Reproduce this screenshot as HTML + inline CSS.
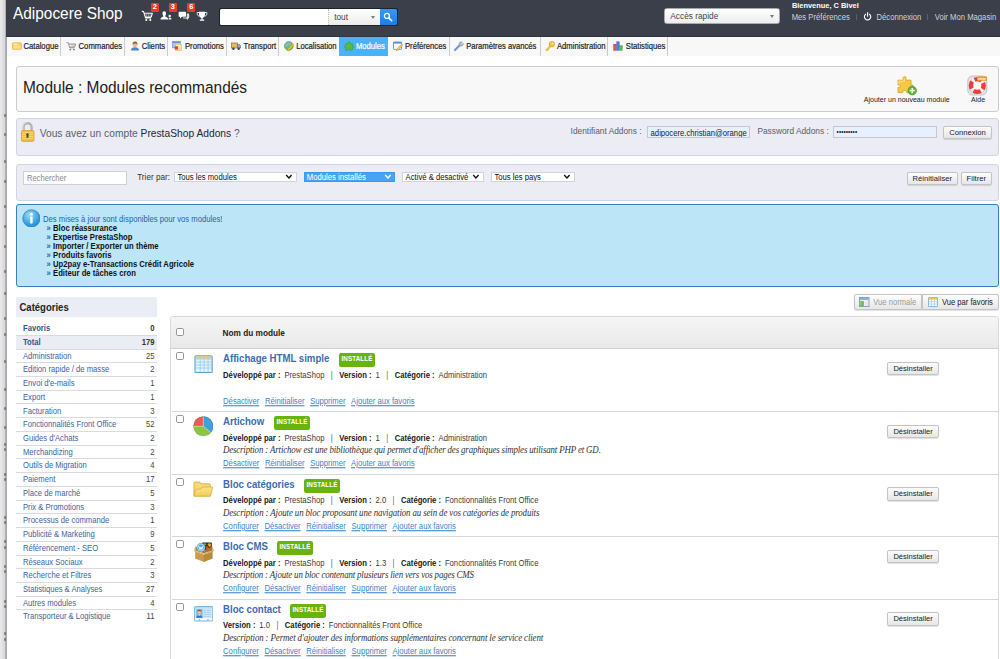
<!DOCTYPE html>
<html lang="fr">
<head>
<meta charset="utf-8">
<title>Modules</title>
<style>
*{box-sizing:border-box;margin:0;padding:0}
html,body{width:1000px;height:659px;overflow:hidden;background:#fff}
body{font-family:"Liberation Sans",sans-serif;font-size:8.5px;color:#222;position:relative}
.abs{position:absolute}
/* left edge strip */
#edge{z-index:5;left:0;top:0;width:7px;height:659px;background:linear-gradient(90deg,#e8e8e8 0,#e7e7e7 2px,#dbdcdf 2.7px,#d8d9dc 4.9px,#b0b0b0 5.5px,#a9a9a9 6.5px,#cfcfcf 7px)}
/* header */
#hdr{left:6px;top:0;width:994px;height:36.6px;background:#3a3f49;border-bottom:1px solid #2f343d}
#shop{left:12.9px;top:3.5px;font-size:17px;color:#fff;white-space:nowrap;transform:scaleX(.906);transform-origin:0 0}
#tabs{left:6px;top:36.5px;width:994px;height:19.3px;background:#f8f8f8}
.tab{position:absolute;top:0;height:19.1px;background:#f8f8f8;border-right:1px solid #ccc;font-size:7.66px;color:#222;white-space:nowrap;line-height:19px}
.tab span{-webkit-text-stroke:.18px currentColor}
.tab.on{background:#49b2ff;color:#fff;border-right:none;margin-left:-.75px;width:48.3px !important}
.tab + .tab > *{margin-left:-1px}
/* boxes */
.box{position:absolute;border:1px solid #ccc;border-radius:3px}
#tbar{left:16px;top:66px;width:982.5px;height:45.7px;background:#f8f8f8}
#ttl{left:23.3px;top:77.7px;font-size:16.35px;color:#222;white-space:nowrap;transform:scaleX(.945);transform-origin:0 0}
#addons{left:16px;top:117.7px;width:982.5px;height:38px;background:#ebecf4;border-color:#d3d4e3}
#filt{left:16px;top:164px;width:982.5px;height:37px;background:#ebecf4;border-color:#d3d4e3}
#info{left:16px;top:203.9px;width:982.5px;height:82.9px;background:#bde5f8;border-color:#3580c0}
.inp{position:absolute;background:#fff;border:1px solid #ccc;font-size:7.2px;color:#333;white-space:nowrap;overflow:hidden}
.btn{position:absolute;border:1px solid #c4c4c4;box-shadow:0 .6px .8px rgba(0,0,0,.12);border-radius:2px;background:linear-gradient(#fdfdfd,#e6e6e6);font-size:7.4px;color:#222;text-align:center;white-space:nowrap}
.sel{position:absolute;background:#fff;border:1px solid #d2d3da;border-radius:.5px;font-size:7.7px;color:#111;white-space:nowrap;overflow:hidden}
.t{position:absolute;white-space:nowrap}
.t,.tab span,.cat span,.cat i,.meta,.lk,.desc,.sel span,.inp span{transform:scaleY(1.07);transform-origin:0 55%}
#tbl{left:169.8px;top:316.2px;width:829.2px;height:360px;border:1px solid #d9d9d9;border-radius:3px 3px 0 0;background:#fff}
#thd{left:170.8px;top:317.2px;width:827.2px;height:31.8px;border-radius:2px 2px 0 0;background:linear-gradient(#f5f5f5,#e9e9e9);border-bottom:1px solid #d0d0d0}
.cb{position:absolute;width:8.2px;height:8.2px;border:1px solid #979797;border-radius:1.8px;background:#fff}
.row{position:absolute;left:170.5px;width:828.5px;height:64px}
.sep{position:absolute;left:171.5px;width:827px;height:1px;background:#d6d6d6}
.mn{position:absolute;left:52.6px;top:4.2px;font-size:10.25px;font-weight:bold;color:#3c6cb0;white-space:nowrap;transform:scaleX(.9395);transform-origin:0 0}
.ins{position:absolute;top:4.4px;width:36.3px;height:13.8px;border-radius:2.2px;background:#68b30c;color:#fff;font-size:7.3px;font-weight:bold;line-height:11.9px;text-align:center;white-space:nowrap}
.ins b{display:inline-block;transform:scaleX(.86);transform-origin:50% 50%;letter-spacing:.1px}
.meta{position:absolute;left:52.6px;top:21.9px;font-size:7.66px;color:#3a3a3a;white-space:nowrap}
.meta b{color:#1a1a1a}
.meta u{display:inline-block;width:3.9px}
.meta s{text-decoration:none;color:#666;margin:0 4.3px}
.desc{position:absolute;left:52.4px;top:33.1px;font-family:"Liberation Serif",serif;font-style:italic;font-size:8.9px;letter-spacing:-.156px;color:#333;white-space:nowrap}
.lk{position:absolute;left:52.6px;top:47.7px;font-size:7.67px;white-space:nowrap}
.lk a{color:#3d85cc;text-decoration:underline;margin-right:5.65px}

.cat{position:absolute;left:16.2px;width:141.3px;border-bottom:1px solid #d9dae2;font-size:7.65px;line-height:13px;color:#3d63a0;white-space:nowrap}
.cat span{position:absolute;left:6.8px}
.cat i{position:absolute;right:3px;font-style:normal;color:#444}
.cat.b{font-weight:bold;color:#2f5590}
.cat.b i{color:#333}
.cat.hl{background:#ebedf4}
.cat.last{border-bottom:none}

.chev{position:absolute;right:3.2px;top:1px;width:7.8px;height:5.4px}
.rq{font-weight:bold;color:#2d6496}
.bdg{position:absolute;top:3.2px;width:7.8px;height:8.5px;border-radius:1px;background:#ee3b24;color:#fff;font-weight:bold;font-size:7.4px;line-height:8.6px;text-align:center}
</style>
</head>
<body>
<div id="edge" class="abs"></div>
<svg class="abs" style="left:0;top:0;z-index:6" width="7" height="659" viewBox="0 0 7 659" fill="rgba(70,60,60,.55)"><rect x="4" y="114" width="2" height="3" rx=".8"/><rect x="4" y="133" width="2" height="3" rx=".8"/><rect x="4" y="160" width="2" height="3" rx=".8"/><rect x="4" y="180" width="2" height="3" rx=".8"/><rect x="4" y="205" width="2" height="3" rx=".8"/><rect x="4" y="225" width="2" height="3" rx=".8"/><rect x="4" y="245" width="2" height="3" rx=".8"/><rect x="4" y="270" width="2" height="3" rx=".8"/><rect x="4" y="292" width="2" height="3" rx=".8"/><rect x="4" y="317" width="2" height="3" rx=".8"/><rect x="4" y="333" width="2" height="3" rx=".8"/><rect x="4" y="360" width="2" height="3" rx=".8"/><rect x="4" y="388" width="2" height="3" rx=".8"/><rect x="4" y="407" width="2" height="3" rx=".8"/><rect x="4" y="426" width="2" height="3" rx=".8"/><rect x="4" y="443" width="2" height="3" rx=".8"/><rect x="4" y="448" width="2" height="3" rx=".8"/><rect x="4" y="473" width="2" height="3" rx=".8"/><rect x="4" y="478" width="2" height="3" rx=".8"/><rect x="4" y="516" width="2" height="3" rx=".8"/><rect x="4" y="521" width="2" height="3" rx=".8"/><rect x="4" y="540" width="2" height="3" rx=".8"/><rect x="4" y="546" width="2" height="3" rx=".8"/><rect x="4" y="565" width="2" height="3" rx=".8"/><rect x="4" y="570" width="2" height="3" rx=".8"/><rect x="4" y="600" width="2" height="3" rx=".8"/><rect x="4" y="605" width="2" height="3" rx=".8"/><rect x="4" y="632" width="2" height="3" rx=".8"/><rect x="4" y="638" width="2" height="3" rx=".8"/></svg>
<div class="abs" style="left:0;top:0;z-index:7">
<div id="hdr" class="abs"></div>
<div id="shop" class="abs">Adipocere Shop</div>
<svg class="abs" style="left:141px;top:10px" width="13" height="12" viewBox="0 0 13 12"><path d="M0.8 1.2 L2.6 1.6 L4.6 8 L10 8 M3.2 3.2 L11.4 3.2 L10.2 7 L4.4 7" fill="none" stroke="#fff" stroke-width="1.1" stroke-linejoin="round"/><path d="M5.2 3.4 L5.6 6.6 M7.3 3.4 L7.3 6.6 M9.3 3.4 L9 6.6" stroke="#cfd1d4" stroke-width=".6"/><circle cx="5.3" cy="10" r="1.05" fill="#fff"/><circle cx="9.3" cy="10" r="1.05" fill="#fff"/></svg>
<svg class="abs" style="left:160px;top:11px" width="12" height="10" viewBox="0 0 12 10"><path d="M4.2 0.3 C5.6 0.3 6.2 1.4 6 2.8 C5.9 3.8 5.6 4.3 5.3 4.7 L5.3 5.6 C6.6 6.2 8.1 6.5 8.2 8.6 L0.5 8.6 C0.6 6.5 2 6.2 3.2 5.6 L3.2 4.7 C2.9 4.3 2.6 3.8 2.5 2.8 C2.3 1.4 2.9 0.3 4.2 0.3Z" fill="#fff"/><circle cx="9.7" cy="4.9" r="1.25" fill="#eeeff0"/><path d="M8.5 8.6 C8.6 7.2 8.9 6.5 9.7 6.5 C10.8 6.5 11.4 7.3 11.5 8.6Z" fill="#eeeff0"/></svg>
<svg class="abs" style="left:178px;top:11px" width="12" height="10" viewBox="0 0 12 10"><path d="M1.4 0.8 H7.2 Q8 0.8 8 1.6 V5 Q8 5.8 7.2 5.8 H4 L2 7.6 V5.8 H1.4 Q0.6 5.8 0.6 5 V1.6 Q0.6 0.8 1.4 0.8Z" fill="#fff"/><path d="M8.8 2.6 H10.4 Q11.2 2.6 11.2 3.4 V6.6 Q11.2 7.4 10.4 7.4 H10 V9 L8.2 7.4 H5.4 Q4.9 7.4 4.7 7 L5 6.6 H8 Q8.8 6.6 8.8 5.8Z" fill="#dfe0e2"/></svg>
<svg class="abs" style="left:196px;top:11px" width="12" height="11" viewBox="0 0 12 11"><path d="M3 0.7 H9 V3.4 C9 5.4 7.6 6.6 6.6 6.9 V8.4 H8.2 V9.8 H3.8 V8.4 H5.4 V6.9 C4.4 6.6 3 5.4 3 3.4Z" fill="#fff"/><path d="M3 1.5 H1.2 V2.8 C1.2 4.2 2.2 5 3.4 5.2 M9 1.5 H10.8 V2.8 C10.8 4.2 9.8 5 8.6 5.2" fill="none" stroke="#fff" stroke-width=".9"/></svg>
<div class="bdg" style="left:151px">2</div><div class="bdg" style="left:169px">3</div><div class="bdg" style="left:187.3px">6</div>

<div class="abs" style="left:219px;top:7.7px;width:179px;height:18.3px;background:#1f2226;border-radius:2px"></div>
<div class="abs" style="left:220px;top:8.7px;width:108px;height:16.3px;background:#fff;border-radius:1.5px 0 0 1.5px"></div>
<div class="abs" style="left:328px;top:8.7px;width:51.5px;height:16.3px;background:linear-gradient(#fff,#ececec);border-left:1px dotted #bbb"></div>
<div class="t" style="left:334.2px;top:12px;font-size:8.3px;color:#444">tout</div>
<div class="abs" style="left:371px;top:15.6px;width:0;height:0;border-left:2.7px solid transparent;border-right:2.7px solid transparent;border-top:3.2px solid #7c7c7c"></div>
<div class="abs" style="left:379.5px;top:8.7px;width:17.8px;height:16.3px;background:linear-gradient(#3a97f5,#1c7de6);border-radius:0 1.5px 1.5px 0"></div>
<svg class="abs" style="left:383px;top:11.8px" width="10" height="10" viewBox="0 0 10 10"><circle cx="3.9" cy="3.9" r="2.5" fill="none" stroke="#fff" stroke-width="1.3"/><path d="M5.8 5.8 L8.6 8.6" stroke="#fff" stroke-width="1.7" stroke-linecap="round"/></svg>
<div class="abs" style="left:664px;top:7.8px;width:115.5px;height:16.2px;background:linear-gradient(#fff,#ededed);border:1px solid #aaa;border-radius:2.5px"></div>
<div class="t" style="left:670.3px;top:11.2px;font-size:8.3px;color:#444">Accès rapide</div>
<div class="abs" style="left:769.8px;top:14.8px;width:0;height:0;border-left:2.9px solid transparent;border-right:2.9px solid transparent;border-top:3.3px solid #777"></div>
<div class="t" style="left:791.9px;top:1.3px;font-size:7.43px;font-weight:bold;color:#fff">Bienvenue, C Bivel</div>
<div class="t" style="left:791.7px;top:12.9px;font-size:7.7px;color:#d0d3d8">Mes Préférences</div>
<div class="abs" style="left:855.8px;top:13.6px;width:1px;height:6.6px;background:#5b5f66"></div>
<svg class="abs" style="left:863px;top:12.4px" width="9.2" height="9.2" viewBox="0 0 9 9"><path d="M2.6 2.2 A3.1 3.1 0 1 0 6.4 2.2" fill="none" stroke="#fff" stroke-width="1.1" stroke-linecap="round"/><path d="M4.5 0.6 V4.2" stroke="#fff" stroke-width="1.1" stroke-linecap="round"/></svg>
<div class="t" style="left:876.5px;top:12.9px;font-size:7.7px;color:#d0d3d8">Déconnexion</div>
<div class="abs" style="left:927px;top:13.6px;width:1px;height:6.6px;background:#5b5f66"></div>
<div class="t" style="left:934.7px;top:12.9px;font-size:7.7px;color:#d0d3d8">Voir Mon Magasin</div>

</div>
<div id="tabs" class="abs">
<div class="tab" style="left:0px;width:55px"><svg class="abs" style="left:5.6px;top:4.6px" width="10" height="10" viewBox="0 0 10 10"><rect x=".5" y="1.9" width="8.8" height="6.3" rx=".6" fill="#f9d46a" stroke="#e9a83f" stroke-width=".8"/><rect x="1.4" y="2.7" width="4" height="1.1" fill="#fff3c4"/><rect x="1.2" y="4.6" width="7.4" height="2.9" fill="#fbe08b"/></svg><span class="abs" style="left:17.5px;top:0">Catalogue</span></div>
<div class="tab" style="left:55px;width:64px"><svg class="abs" style="left:6px;top:4.6px" width="10" height="10" viewBox="0 0 10 10"><path d="M.5 1.5 L2.3 1.8 L3.6 6.8 H8.6 M2.7 3 H9.6 L8.7 6 H3.6" fill="#d9d9d9" stroke="#8f8f8f" stroke-width=".9" stroke-linejoin="round"/><circle cx="4.3" cy="8.6" r=".9" fill="#777"/><circle cx="7.9" cy="8.6" r=".9" fill="#777"/></svg><span class="abs" style="left:18.6px;top:0">Commandes</span></div>
<div class="tab" style="left:119px;width:43px"><svg class="abs" style="left:6px;top:4.6px" width="10" height="10" viewBox="0 0 10 10"><path d="M1 9.6 C1 7 2.5 6.3 5 6.3 C7.5 6.3 9 7 9 9.6Z" fill="#4d86c9"/><circle cx="5" cy="3.8" r="2.4" fill="#f0b98a"/><path d="M2.5 3.6 C2.4 1.5 3.6 .6 5 .6 C6.4 .6 7.6 1.5 7.5 3.6 C6.8 2.6 6 2.4 5 2.4 C4 2.4 3.2 2.6 2.5 3.6Z" fill="#8a5a2b"/></svg><span class="abs" style="left:17.7px;top:0">Clients</span></div>
<div class="tab" style="left:162px;width:59px"><svg class="abs" style="left:5px;top:4.6px" width="10" height="10" viewBox="0 0 10 10"><rect x=".4" y=".6" width="8" height="6.2" fill="#a9c8ee" stroke="#6d9bd6" stroke-width=".6"/><rect x=".4" y=".6" width="8" height="1.4" fill="#5f93da"/><rect x="3.6" y="3.2" width="6" height="6.2" fill="#fbe7a6" stroke="#e5b85a" stroke-width=".6"/><rect x="2.6" y="5.2" width="3.4" height="3.4" rx=".6" fill="#ee3d3d"/></svg><span class="abs" style="left:18px;top:0">Promotions</span></div>
<div class="tab" style="left:221px;width:52px"><svg class="abs" style="left:4.8px;top:4.6px" width="10" height="10" viewBox="0 0 10 10"><rect x=".3" y="2" width="6.2" height="5" fill="#e9b85c" stroke="#8a6a35" stroke-width=".7"/><path d="M6.5 3.4 H8.6 L9.7 5 V7 H6.5Z" fill="#9aa7b8" stroke="#5b6675" stroke-width=".6"/><circle cx="2.4" cy="7.7" r="1.2" fill="#444"/><circle cx="7.7" cy="7.7" r="1.2" fill="#444"/></svg><span class="abs" style="left:17.6px;top:0">Transport</span></div>
<div class="tab" style="left:273px;width:61px"><svg class="abs" style="left:6px;top:4.6px" width="10" height="10" viewBox="0 0 10 10"><circle cx="4.8" cy="5" r="4.4" fill="#6fc04a" stroke="#4b9a3a" stroke-width=".6"/><path d="M2 2.2 C3.4 1 6.2 1 7.4 2.2 C6.8 4 5 3.6 4.4 5 C3.6 6.6 2 6 1.2 5 C1 4 1.3 3 2 2.2Z" fill="#7fb6e8"/><path d="M3.6 8.6 L8.6 2.6 L9.8 3.6 L4.9 9.6 L3.2 10Z" fill="#f3c64b" stroke="#b98a2a" stroke-width=".4"/></svg><span class="abs" style="left:18.2px;top:0">Localisation</span></div>
<div class="tab on" style="left:334px;width:49px"><svg class="abs" style="left:5.3px;top:4.6px" width="10" height="10" viewBox="0 0 10 10"><path d="M3.6 1.6 C3.6 .2 6.2 .2 6.2 1.6 L6 2.8 H8.6 V5 C10 4.4 10 7.2 8.6 6.8 V9.2 H6.2 C6.6 7.8 3.6 7.8 4 9.2 H1.4 V6.6 C0 7.2 0 4.4 1.4 5 V2.8 H3.8Z" fill="#57b947" stroke="#3c9a35" stroke-width=".5"/></svg><span class="abs" style="left:17.7px;top:0">Modules</span></div>
<div class="tab" style="left:383px;width:61px"><svg class="abs" style="left:4.6px;top:4.6px" width="10" height="10" viewBox="0 0 10 10"><rect x=".5" y="1" width="8" height="7.4" rx=".6" fill="#fff" stroke="#5d8fd6" stroke-width=".9"/><rect x=".5" y="1" width="8" height="1.6" fill="#5d8fd6"/><path d="M3.8 8 L8.6 3 L9.9 4.2 L5.2 9.2 L3.4 9.8Z" fill="#f3c64b" stroke="#b98a2a" stroke-width=".4"/></svg><span class="abs" style="left:17px;top:0">Préférences</span></div>
<div class="tab" style="left:444px;width:91px"><svg class="abs" style="left:4.8px;top:4.6px" width="10" height="10" viewBox="0 0 10 10"><path d="M1 9 L5.6 4.4" stroke="#6f9be0" stroke-width="2.2" stroke-linecap="round"/><path d="M5 3.6 C4.6 1.6 6.6 .2 8.4 1 L7 2.4 L7.8 3.4 L9.4 2.2 C9.8 4 8.2 5.6 6.2 5Z" fill="#a9b6c8" stroke="#8090a8" stroke-width=".4"/></svg><span class="abs" style="left:17.2px;top:0">Paramètres avancés</span></div>
<div class="tab" style="left:535px;width:67px"><svg class="abs" style="left:4.8px;top:4.6px" width="10" height="10" viewBox="0 0 10 10"><circle cx="6.8" cy="3.2" r="2.7" fill="#f6c945" stroke="#d39a22" stroke-width=".7"/><circle cx="7.5" cy="2.5" r=".8" fill="#fff6d0"/><path d="M4.8 4.8 L1 8.6 L1 9.6 L2.6 9.6 L2.8 8.6 L3.8 8.4 L4 7.4 L5.6 6Z" fill="#f6c945" stroke="#d39a22" stroke-width=".5"/></svg><span class="abs" style="left:17px;top:0">Administration</span></div>
<div class="tab" style="left:602px;width:60px"><svg class="abs" style="left:5.8px;top:4.6px" width="10" height="10" viewBox="0 0 10 10"><rect x=".6" y="3.2" width="2.6" height="6.2" fill="#ee4f4f" stroke="#c93636" stroke-width=".4"/><rect x="3.7" y=".8" width="2.6" height="8.6" fill="#4a7fd6" stroke="#3563b3" stroke-width=".4"/><rect x="6.8" y="4.6" width="2.6" height="4.8" fill="#59b95a" stroke="#3e9942" stroke-width=".4"/></svg><span class="abs" style="left:18.8px;top:0">Statistiques</span></div>
</div>
<div id="tbar" class="box"></div>
<div id="ttl" class="abs">Module : Modules recommandés</div>
<svg class="abs" style="left:897px;top:75px" width="21" height="21" viewBox="0 0 21 21"><path d="M6.2 3.6 C5.4 1 9.8 1 9 3.6 L8.8 5.2 H14 V10 C17 8.6 17 13.8 14 12.6 V17.6 H9.6 C10.4 14.8 5 14.8 5.8 17.6 H1 V12.4 C4 13.8 4 8.6 1 10 V5.2 H6.4Z" fill="#f7c843" stroke="#dca32a" stroke-width=".9"/><path d="M2 6.2 H7.4 L7.2 3.4 M2 6.2 V9" fill="none" stroke="#fde79a" stroke-width=".9"/><circle cx="15.2" cy="15.6" r="4.3" fill="#5fb53a" stroke="#3f9a2a" stroke-width=".7"/><path d="M15.2 13 V18.2 M12.6 15.6 H17.8" stroke="#fff" stroke-width="1.5"/></svg>
<div class="t" style="left:863.8px;top:95.5px;font-size:7.03px;color:#222">Ajouter un nouveau module</div>
<svg class="abs" style="left:967px;top:75px" width="21" height="21" viewBox="0 0 21 21"><rect x=".8" y="1" width="19" height="19" rx="4.5" fill="#e3e3e3" stroke="#b9b9b9" stroke-width=".8"/><circle cx="10.3" cy="10.5" r="6.3" fill="none" stroke="#ee3b3b" stroke-width="4.6"/><circle cx="10.3" cy="10.5" r="6.3" fill="none" stroke="#f4f4f4" stroke-width="4.6" stroke-dasharray="2.6 7.296" stroke-dashoffset="-3.65"/><circle cx="10.3" cy="10.5" r="3.9" fill="#fbfbfb"/><rect x="10" y="1.2" width="10" height="4.6" rx="1" fill="#f39a2d"/><text x="15" y="5" font-family="Liberation Sans" font-size="3.8" font-weight="bold" fill="#fff" text-anchor="middle">new</text></svg>
<div class="t" style="left:971px;top:95.5px;font-size:7.03px;color:#222">Aide</div>

<div id="addons" class="box"></div>
<svg class="abs" style="left:20px;top:121px" width="15" height="22" viewBox="0 0 15 22"><path d="M3.6 10 V6.2 C3.6 .9 11.6 .9 11.6 6.2 V10" fill="none" stroke="#b4b4b4" stroke-width="2.3"/><path d="M3 10 V6.2 C3 2.4 5.4 1.6 7 1.6" fill="none" stroke="#dcdcdc" stroke-width=".9"/><rect x="1.4" y="9.6" width="12.6" height="10.8" rx="1.3" fill="#f4bd3c" stroke="#d9952a" stroke-width=".7"/><path d="M2 11.5 H13.4 M2 13.5 H13.4 M2 15.5 H13.4 M2 17.5 H13.4" stroke="#f9d978" stroke-width=".8"/><path d="M7.5 12.2 a1.3 1.3 0 0 1 .7 2.4 L8.6 16.8 H6.4 L6.8 14.6 A1.3 1.3 0 0 1 7.5 12.2Z" fill="#5a3c12"/></svg>
<div class="t" style="left:39.7px;top:127.7px;font-size:10.25px;color:#5a5f70">Vous avez un compte <span style="color:#26262e">PrestaShop Addons</span> ?</div>
<div class="t" style="left:570.6px;top:125.9px;font-size:8.35px;color:#5c5c66">Identifiant Addons :</div>
<div class="inp" style="left:647px;top:126.2px;width:103px;height:12.3px;background:#e8f0fe;border-color:#c2c8d6"><span class="abs" style="left:2.6px;top:1.4px;font-size:7.68px;color:#222">adipocere.christian@orange</span></div>
<div class="t" style="left:757.4px;top:125.9px;font-size:8.35px;color:#5c5c66">Password Addons :</div>
<div class="inp" style="left:833px;top:126.2px;width:103.5px;height:12.3px;background:#e8f0fe;border-color:#c2c8d6"><span class="abs" style="left:2.6px;top:1.2px;font-size:6.4px;letter-spacing:.05px;color:#222">•••••••••</span></div>
<div class="btn" style="left:943px;top:126.2px;width:49px;height:12.6px;line-height:11.4px;font-size:7.63px">Connexion</div>

<div id="filt" class="box"></div>
<div class="inp" style="left:23.2px;top:171.2px;width:103.6px;height:13.4px;border-color:#cfcfd6"><span class="abs" style="left:2.7px;top:2.1px;font-size:7.64px;color:#8a8a8a">Rechercher</span></div>
<div class="t" style="left:137.2px;top:173px;font-size:8.16px;color:#333">Trier par:</div>
<div class="sel" style="left:174.2px;top:172.3px;width:122.4px;height:9.4px"><span class="abs" style="left:2.2px;top:-.5px">Tous les modules</span><svg class="chev" viewBox="0 0 8 6"><path d="M1 1.2 L4 4.4 L7 1.2" fill="none" stroke="#111" stroke-width="1.5"/></svg></div>
<div class="sel" style="left:303.6px;top:172.3px;width:91.9px;height:9.3px;background:#46a4f7;border-color:#3d97ea;color:#fff"><span class="abs" style="left:2.2px;top:-.5px">Modules installés</span><svg class="chev" viewBox="0 0 8 6"><path d="M1 1.2 L4 4.4 L7 1.2" fill="none" stroke="#fff" stroke-width="1.5"/></svg></div>
<div class="sel" style="left:402.4px;top:172.3px;width:81.8px;height:9.4px"><span class="abs" style="left:2.2px;top:-.5px">Activé &amp; desactivé</span><svg class="chev" viewBox="0 0 8 6"><path d="M1 1.2 L4 4.4 L7 1.2" fill="none" stroke="#111" stroke-width="1.5"/></svg></div>
<div class="sel" style="left:491.2px;top:172.3px;width:83.4px;height:9.4px"><span class="abs" style="left:2.2px;top:-.5px">Tous les pays</span><svg class="chev" viewBox="0 0 8 6"><path d="M1 1.2 L4 4.4 L7 1.2" fill="none" stroke="#111" stroke-width="1.5"/></svg></div>
<div class="btn" style="left:907px;top:172px;width:50.6px;height:13.2px;line-height:12px;font-size:7.64px">Réinitialiser</div>
<div class="btn" style="left:960.6px;top:172px;width:31.4px;height:13.2px;line-height:12px;font-size:7.64px">Filtrer</div>

<div id="info" class="box"></div>
<svg class="abs" style="left:21.7px;top:208.7px" width="18.8" height="18.8" viewBox="0 0 20 20"><defs><radialGradient id="ig" cx=".4" cy=".3" r=".8"><stop offset="0" stop-color="#9fdcf9"/><stop offset=".6" stop-color="#3ca5e3"/><stop offset="1" stop-color="#1d7fc4"/></radialGradient></defs><circle cx="10" cy="10" r="9.2" fill="url(#ig)" stroke="#2a80bd" stroke-width=".8"/><circle cx="10" cy="5.6" r="1.5" fill="#fff"/><rect x="8.7" y="8" width="2.6" height="7.4" rx=".5" fill="#fff"/></svg>
<div class="t" style="left:43px;top:216.2px;font-size:7.69px;line-height:8.95px;color:#1d66a3">Des mises à jour sont disponibles pour vos modules!</div>
<div class="t" style="left:46.6px;top:224.20px;font-size:7.69px;line-height:8.98px;color:#111;font-weight:bold"><span class="rq">»</span> Bloc réassurance</div>
<div class="t" style="left:46.6px;top:233.20px;font-size:7.69px;line-height:8.98px;color:#111;font-weight:bold"><span class="rq">»</span> Expertise PrestaShop</div>
<div class="t" style="left:46.6px;top:242.20px;font-size:7.69px;line-height:8.98px;color:#111;font-weight:bold"><span class="rq">»</span> Importer / Exporter un thème</div>
<div class="t" style="left:46.6px;top:251.20px;font-size:7.69px;line-height:8.98px;color:#111;font-weight:bold"><span class="rq">»</span> Produits favoris</div>
<div class="t" style="left:46.6px;top:260.20px;font-size:7.69px;line-height:8.98px;color:#111;font-weight:bold"><span class="rq">»</span> Up2pay e-Transactions Crédit Agricole</div>
<div class="t" style="left:46.6px;top:269.20px;font-size:7.69px;line-height:8.98px;color:#111;font-weight:bold"><span class="rq">»</span> Éditeur de tâches cron</div>

<div class="abs" style="left:16.2px;top:297px;width:141.3px;height:20.2px;background:#ebedf4"></div>
<div class="t" style="left:19.5px;top:302px;font-size:9.53px;font-weight:bold;color:#222">Catégories</div>
<div class="cat b" style="top:317.80px;height:18.05px;padding-top:4.7px"><span>Favoris</span><i>0</i></div>
<div class="cat b hl" style="top:335.85px;height:13.73px;padding-top:0.00px"><span>Total</span><i>179</i></div>
<div class="cat" style="top:349.58px;height:13.73px;padding-top:0.00px"><span>Administration</span><i>25</i></div>
<div class="cat" style="top:363.31px;height:13.73px;padding-top:0.00px"><span>Edition rapide / de masse</span><i>2</i></div>
<div class="cat" style="top:377.04px;height:13.73px;padding-top:0.00px"><span>Envoi d'e-mails</span><i>1</i></div>
<div class="cat" style="top:390.77px;height:13.73px;padding-top:0.00px"><span>Export</span><i>1</i></div>
<div class="cat" style="top:404.50px;height:13.73px;padding-top:0.00px"><span>Facturation</span><i>3</i></div>
<div class="cat" style="top:418.23px;height:13.73px;padding-top:0.00px"><span>Fonctionnalités Front Office</span><i>52</i></div>
<div class="cat" style="top:431.96px;height:13.73px;padding-top:0.00px"><span>Guides d'Achats</span><i>2</i></div>
<div class="cat" style="top:445.69px;height:13.73px;padding-top:0.00px"><span>Merchandizing</span><i>2</i></div>
<div class="cat" style="top:459.42px;height:13.73px;padding-top:0.00px"><span>Outils de Migration</span><i>4</i></div>
<div class="cat" style="top:473.15px;height:13.73px;padding-top:0.00px"><span>Paiement</span><i>17</i></div>
<div class="cat" style="top:486.88px;height:13.73px;padding-top:0.00px"><span>Place de marché</span><i>5</i></div>
<div class="cat" style="top:500.61px;height:13.73px;padding-top:0.00px"><span>Prix &amp; Promotions</span><i>3</i></div>
<div class="cat" style="top:514.34px;height:13.73px;padding-top:0.00px"><span>Processus de commande</span><i>1</i></div>
<div class="cat" style="top:528.07px;height:13.73px;padding-top:0.00px"><span>Publicité &amp; Marketing</span><i>9</i></div>
<div class="cat" style="top:541.80px;height:13.73px;padding-top:0.00px"><span>Référencement - SEO</span><i>5</i></div>
<div class="cat" style="top:555.53px;height:13.73px;padding-top:0.00px"><span>Réseaux Sociaux</span><i>2</i></div>
<div class="cat" style="top:569.26px;height:13.73px;padding-top:0.00px"><span>Recherche et Filtres</span><i>3</i></div>
<div class="cat" style="top:582.99px;height:13.73px;padding-top:0.00px"><span>Statistiques &amp; Analyses</span><i>27</i></div>
<div class="cat" style="top:596.72px;height:13.73px;padding-top:0.00px"><span>Autres modules</span><i>4</i></div>
<div class="cat last" style="top:610.45px;height:13.73px;padding-top:0.00px"><span>Transporteur &amp; Logistique</span><i>11</i></div>
<div class="btn" style="left:853.8px;top:294.4px;width:68.4px;height:15.2px;border-radius:2px 0 0 2px;border-color:#c4c4c4"></div>
<svg class="abs" style="left:859px;top:297.2px" width="10.5" height="10" viewBox="0 0 21 20"><rect x="1" y="1" width="19" height="18" fill="#f4f7f4" stroke="#6c8fb0" stroke-width="1.6"/><rect x="1.8" y="1.8" width="17.4" height="4.4" fill="#8fb3d6"/><rect x="3.4" y="8.6" width="6" height="9" fill="#7cc142" stroke="#4d9a2a" stroke-width=".8"/><rect x="11" y="8.6" width="7" height="9" fill="#e6e6e6"/></svg>
<div class="t" style="left:873.3px;top:297.6px;font-size:7.62px;color:#9a9a9a">Vue normale</div>
<div class="btn" style="left:922.4px;top:294.4px;width:76.4px;height:15.2px;border-radius:0 2px 2px 0;border-color:#c4c4c4"></div>
<svg class="abs" style="left:927.8px;top:297.2px" width="10" height="10" viewBox="0 0 20 20"><rect x="1" y="1" width="18" height="18" rx="1" fill="#fff" stroke="#6ea3d8" stroke-width="1.6"/><rect x="1.8" y="1.8" width="16.4" height="3.6" fill="#f3c64b"/><path d="M1 9.4 H19 M1 14 H19 M7 5 V19 M13 5 V19" stroke="#9cc3e8" stroke-width="1.3"/></svg>
<div class="t" style="left:942px;top:297.6px;font-size:7.62px;color:#222">Vue par favoris</div>

<!--TABLE_START-->
<div id="tbl" class="abs"></div>
<div id="thd" class="abs"></div>
<div class="cb" style="left:176.1px;top:328.2px"></div>
<div class="t" style="left:222.5px;top:328.6px;font-size:8.27px;font-weight:bold;color:#222">Nom du module</div>
<div class="row" style="top:349.00px"><div class="cb" style="left:5.7px;top:3.3px"></div><svg class="abs" style="left:23.2px;top:5.6px" width="19.2" height="18.6" viewBox="0 0 20 20"><rect x=".8" y=".8" width="18.4" height="18.4" rx="1.2" fill="#e4f3fc" stroke="#62a7d6" stroke-width="1.3"/><rect x="1.6" y="1.5" width="16.8" height="2.3" fill="#f5c648"/><rect x="1.6" y="16.6" width="16.8" height="1.6" fill="#fff"/><path d="M1 4.4 H19 M1 7.6 H19 M1 10.8 H19 M1 14 H19 M6.4 1.4 V18 M10.6 1.4 V18 M14.8 1.4 V18" stroke="#9ccbeb" stroke-width=".9"/><path d="M1.4 18.6 H18.6" stroke="#4f9aca" stroke-width="1"/></svg><div class="mn">Affichage HTML simple</div><div class="ins" style="left:168.3px"><b>INSTALLÉ</b></div><div class="meta"><b>Développé par :</b><u></u>PrestaShop <s>|</s> <b>Version :</b><u></u>1 <s>|</s> <b>Catégorie :</b><u></u>Administration</div><div class="lk"><a>Désactiver</a><a>Réinitialiser</a><a>Supprimer</a><a>Ajouter aux favoris</a></div><div class="btn" style="left:716.6px;top:12.9px;width:52px;height:13.6px;line-height:12.4px;font-size:7.56px">Désinstaller</div></div>
<div class="sep" style="top:410.75px"></div>
<div class="row" style="top:411.75px"><div class="cb" style="left:5.7px;top:3.3px"></div><svg class="abs" style="left:22.4px;top:4.6px" width="20.6" height="20.6" viewBox="0 0 21 21"><circle cx="10.5" cy="10.5" r="10" fill="#8cc63f"/><path d="M10.5 10.5 V.5 A10 10 0 0 1 18.2 16.9Z" fill="#3f9fe0"/><path d="M10.5 10.5 H.5 A10 10 0 0 1 10.5 .5Z" fill="#ee5a4f"/><path d="M.5 10.5 H10.5 L18.2 16.9" fill="none" stroke="#d8f0b0" stroke-width=".7"/><path d="M10.5 .5 V10.5" stroke="#bfe0f8" stroke-width=".7"/><circle cx="10.5" cy="10.5" r="10" fill="none" stroke="rgba(0,0,0,.18)" stroke-width=".8"/></svg><div class="mn">Artichow</div><div class="ins" style="left:103.3px"><b>INSTALLÉ</b></div><div class="meta"><b>Développé par :</b><u></u>PrestaShop <s>|</s> <b>Version :</b><u></u>1 <s>|</s> <b>Catégorie :</b><u></u>Administration</div><div class="desc" style="letter-spacing:-0.144px">Description : Artichow est une bibliothèque qui permet d'afficher des graphiques simples utilisant PHP et GD.</div><div class="lk"><a>Désactiver</a><a>Réinitialiser</a><a>Supprimer</a><a>Ajouter aux favoris</a></div><div class="btn" style="left:716.6px;top:12.9px;width:52px;height:13.6px;line-height:12.4px;font-size:7.56px">Désinstaller</div></div>
<div class="sep" style="top:474.25px"></div>
<div class="row" style="top:474.60px"><div class="cb" style="left:5.7px;top:3.3px"></div><svg class="abs" style="left:22.6px;top:6.8px" width="20" height="16.4" viewBox="0 0 21 17"><defs><linearGradient id="fg" x1="0" y1="0" x2="0" y2="1"><stop offset="0" stop-color="#fbe38c"/><stop offset="1" stop-color="#f4cc55"/></linearGradient></defs><path d="M1 2 Q1 1 2 1 H7.2 L8.4 2.8 H17.2 Q18.2 2.8 18.2 3.8 V15.6 H1Z" fill="#f8d970" stroke="#dba73a" stroke-width=".8"/><path d="M3.4 8.4 H8 L10 6.2 H19.6 Q20.8 6.2 20.5 7.4 L18.4 15.8 H1 L2.4 9.2 Q2.6 8.4 3.4 8.4Z" fill="url(#fg)" stroke="#dba73a" stroke-width=".8"/></svg><div class="mn">Bloc catégories</div><div class="ins" style="left:133.1px"><b>INSTALLÉ</b></div><div class="meta"><b>Développé par :</b><u></u>PrestaShop <s>|</s> <b>Version :</b><u></u>2.0 <s>|</s> <b>Catégorie :</b><u></u>Fonctionnalités Front Office</div><div class="desc" style="letter-spacing:-0.123px">Description : Ajoute un bloc proposant une navigation au sein de vos catégories de produits</div><div class="lk"><a>Configurer</a><a>Désactiver</a><a>Réinitialiser</a><a>Supprimer</a><a>Ajouter aux favoris</a></div><div class="btn" style="left:716.6px;top:12.9px;width:52px;height:13.6px;line-height:12.4px;font-size:7.56px">Désinstaller</div></div>
<div class="sep" style="top:536.25px"></div>
<div class="row" style="top:536.70px"><div class="cb" style="left:5.7px;top:3.3px"></div><svg class="abs" style="left:23.4px;top:4.9px" width="19.8" height="20.4" viewBox="0 0 20 20.6"><rect x="8.2" y=".4" width="9.8" height="8" rx=".6" fill="#2b2b2b"/><path d="M9.4 1.6 C10.6 .8 12.2 1.2 12.6 2.6 C12 3.8 10.4 4 9.4 3.2Z" fill="#58b030"/><path d="M13.6 2.4 C14.6 .8 16.6 1 17.2 2.2 L16.6 5.4 C15.6 4.6 14.4 4 13.6 2.4Z" fill="#f6a21e"/><path d="M12.4 4 C13.8 3.8 15.2 5 15.4 6.8 L12.6 7.6 C12 6.4 12 5 12.4 4Z" fill="#e33b2c"/><path d="M1.4 4.6 L10 8.6 L18.6 4.6 L18.6 8.6 L10 11.4 L1.4 8.6Z" fill="#a57a30"/><circle cx="7" cy="5.6" r="4.5" fill="#4ba7e6"/><circle cx="7" cy="5.6" r="3.5" fill="none" stroke="#cfe8fa" stroke-width=".7"/><path d="M4.8 4 L6.1 7.6 L7 5 L7.9 7.6 L9.2 4" fill="none" stroke="#fff" stroke-width=".9"/><path d="M.2 8.2 L1.4 4.6 L1.4 8.6 L10 11.6 L10 12.8 L.2 9.6Z" fill="#dcb46a"/><path d="M19.8 8.2 L18.6 4.6 L18.6 8.6 L10 11.6 L10 12.8 L19.8 9.6Z" fill="#d1a75a"/><path d="M1.2 9.8 L10 12.8 L10 20.2 L1.2 16.6Z" fill="#c99b4a"/><path d="M18.8 9.8 L10 12.8 L10 20.2 L18.8 16.6Z" fill="#b98a3c"/><path d="M10 12.8 V20.2" stroke="#a87c32" stroke-width=".5"/></svg><div class="mn">Bloc CMS</div><div class="ins" style="left:106.3px"><b>INSTALLÉ</b></div><div class="meta"><b>Développé par :</b><u></u>PrestaShop <s>|</s> <b>Version :</b><u></u>1.3 <s>|</s> <b>Catégorie :</b><u></u>Fonctionnalités Front Office</div><div class="desc" style="letter-spacing:-0.158px">Description : Ajoute un bloc contenant plusieurs lien vers vos pages CMS</div><div class="lk"><a>Configurer</a><a>Désactiver</a><a>Réinitialiser</a><a>Supprimer</a><a>Ajouter aux favoris</a></div><div class="btn" style="left:716.6px;top:12.9px;width:52px;height:13.6px;line-height:12.4px;font-size:7.56px">Désinstaller</div></div>
<div class="sep" style="top:598.50px"></div>
<div class="row" style="top:599.50px"><div class="cb" style="left:5.7px;top:3.3px"></div><svg class="abs" style="left:23.2px;top:6.5px" width="19.4" height="15.8" viewBox="0 0 19.4 15.8"><rect x=".6" y=".6" width="18.2" height="14.4" rx="1" fill="#d3e9f8" stroke="#7fb6e4" stroke-width="1.1"/><rect x="1.2" y="1.2" width="17" height="1.3" fill="#b7d9f2"/><rect x="1.2" y="12.4" width="17" height="1.7" fill="#fff"/><rect x="2.2" y="3" width="6.4" height="8.8" fill="#7db8ee"/><path d="M2.2 11.8 C2.2 8.4 8.6 8.4 8.6 11.8Z" fill="#2f74cc"/><path d="M4.3 8.6 L5.4 9.9 L6.5 8.6Z" fill="#eaf4fc"/><ellipse cx="5.4" cy="6" rx="1.7" ry="2.1" fill="#f2c089"/><path d="M3.4 6 C3.1 3 7.7 3 7.4 6 C6.8 4.6 4 4.6 3.4 6Z" fill="#8a4f1c"/><path d="M9.6 4.4 H17 M9.6 6.4 H17 M9.6 8.4 H17 M9.6 10.4 H17" stroke="#8fbfe8" stroke-width=".7" stroke-dasharray="2.6 .6"/><path d="M4.6 14.2 L5.4 13.2 L6.2 14.2 M13.2 14.2 L14 13.2 L14.8 14.2" fill="#5fa0dc" stroke="#5fa0dc" stroke-width=".5"/></svg><div class="mn">Bloc contact</div><div class="ins" style="left:119.1px"><b>INSTALLÉ</b></div><div class="meta"><b>Version :</b><u></u>1.0 <s>|</s> <b>Catégorie :</b><u></u>Fonctionnalités Front Office</div><div class="desc" style="letter-spacing:-0.116px">Description : Permet d'ajouter des informations supplémentaires concernant le service client</div><div class="lk"><a>Configurer</a><a>Désactiver</a><a>Réinitialiser</a><a>Supprimer</a><a>Ajouter aux favoris</a></div><div class="btn" style="left:716.6px;top:12.9px;width:52px;height:13.6px;line-height:12.4px;font-size:7.56px">Désinstaller</div></div>
<!--TABLE_END-->
</body>
</html>
